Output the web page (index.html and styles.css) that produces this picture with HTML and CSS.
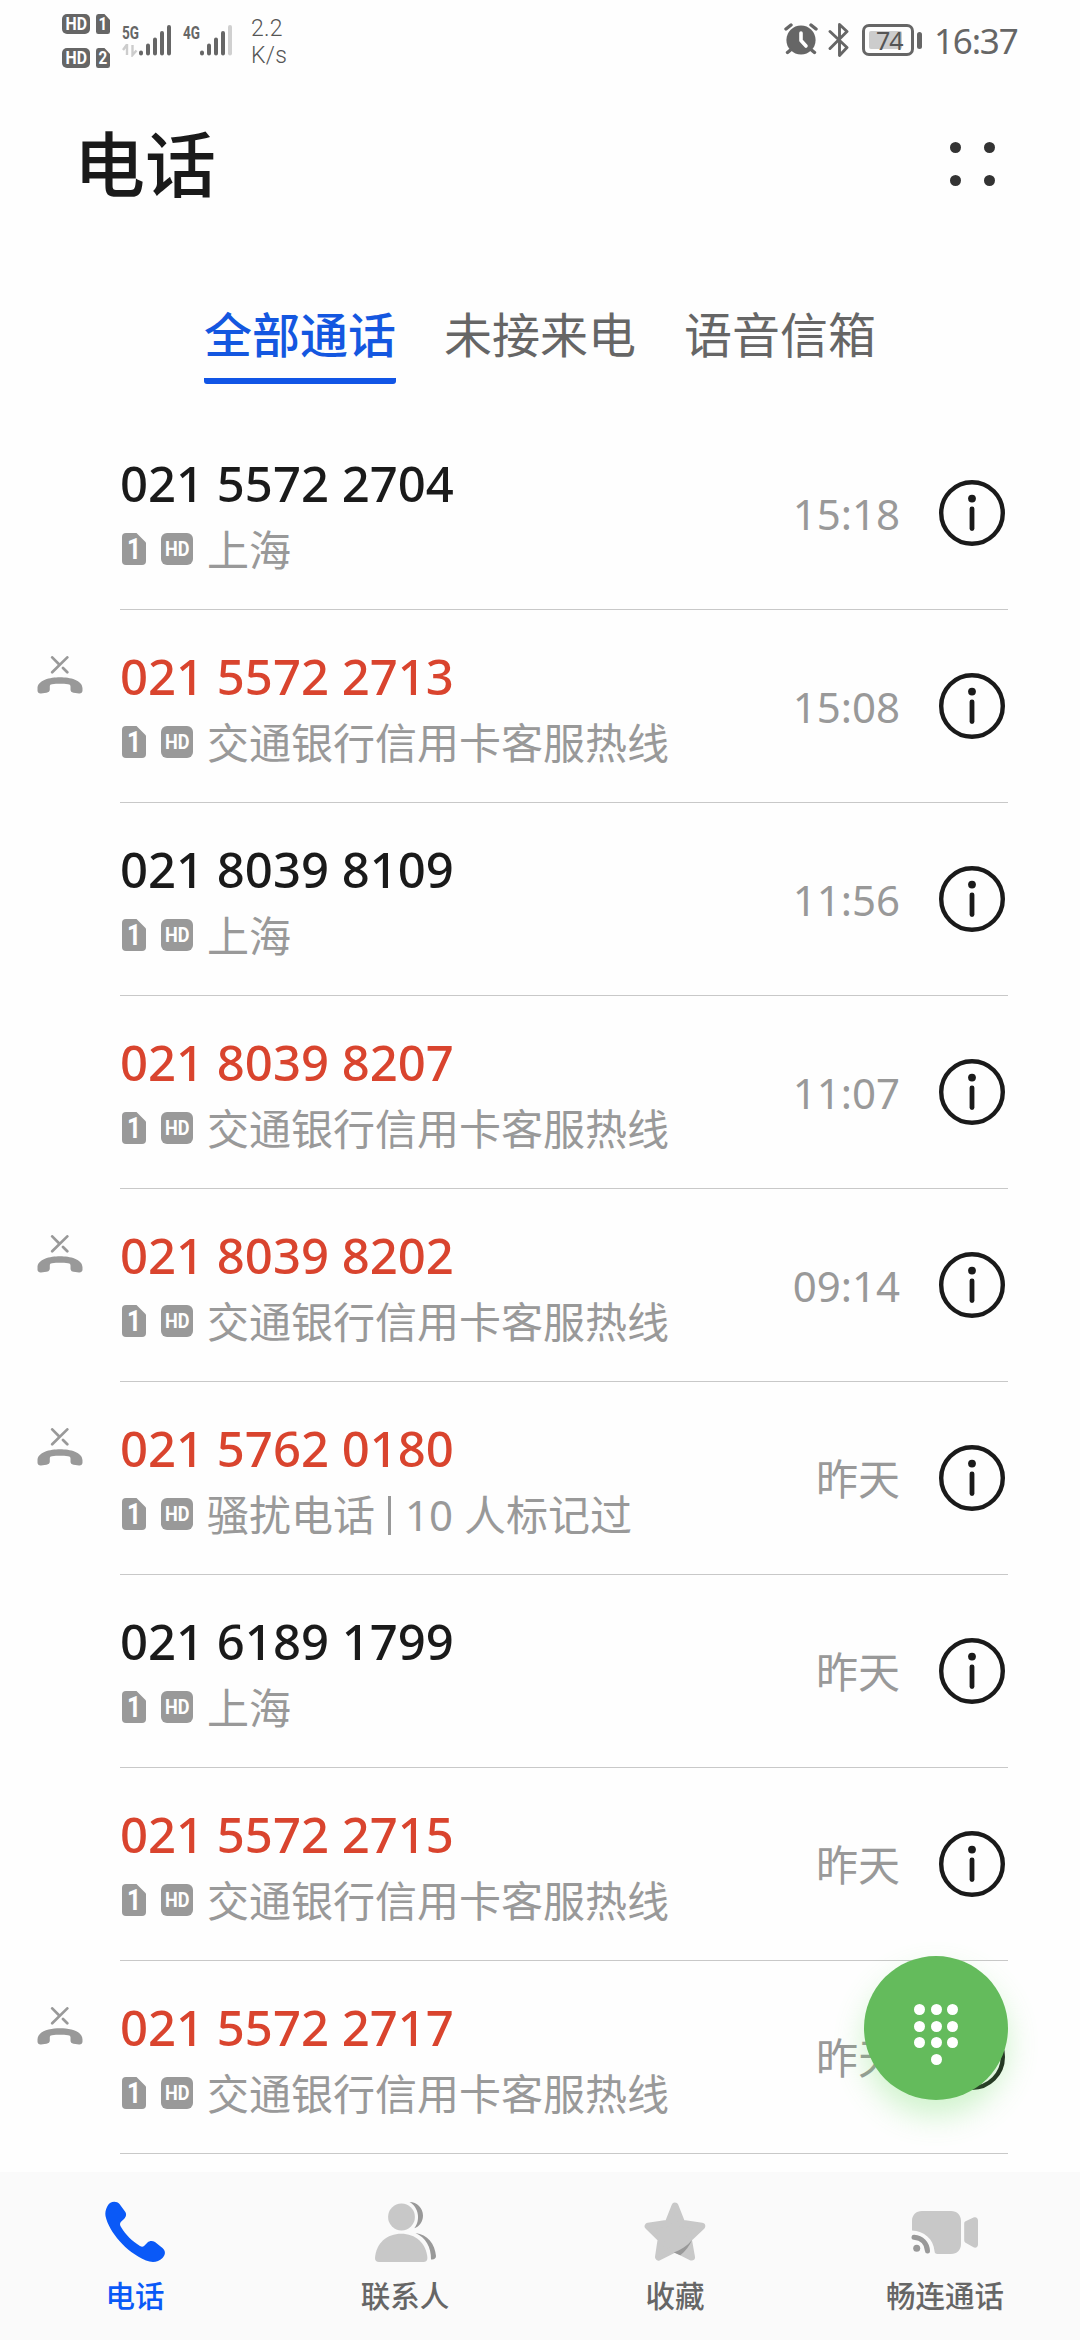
FILE: index.html
```
<!DOCTYPE html>
<html lang="zh-CN">
<head>
    <meta charset="UTF-8">
    <meta name="viewport" content="width=device-width, initial-scale=1.0">
    <title>电话</title>
    <link rel="stylesheet" href="styles.css">
</head>
<body>
    <!-- shared icons -->
    <svg class="defs" width="0" height="0">
        <symbol id="sim" viewBox="0 0 24 32">
            <path d="M4 0H14.5L24 9.5V28a4 4 0 0 1-4 4H4a4 4 0 0 1-4-4V4a4 4 0 0 1 4-4z" fill="currentColor"/>
        </symbol>
        <symbol id="info" viewBox="0 0 66 66">
            <circle cx="33" cy="33" r="30.8" fill="none" stroke="#1a1a1a" stroke-width="4.4"/>
            <circle cx="33" cy="18.6" r="3.9" fill="#1a1a1a"/>
            <path d="M33 28.8V48.6" stroke="#1a1a1a" stroke-width="4.8" stroke-linecap="round"/>
        </symbol>
        <symbol id="missed" viewBox="0 0 46 38">
            <path d="M15.2 1.4L22 8.2M30.3 1.4L15.2 16.3M26 12L30.3 16.3" fill="none" stroke="#999" stroke-width="2.7" stroke-linecap="round"/>
            <path d="M23 21.2C33 21.2 45.5 24 45.5 32.5V34.5C45.5 36.5 44 37.7 42 37.5L36.5 36.7C34.5 36.4 33.5 35.5 33.5 33.5V30.5C33.5 29 32.5 28.5 31 28.3C26 27.7 20 27.7 15 28.3C13.5 28.5 12.8 29 12.8 30.5V33.5C12.8 35.5 11.5 36.4 9.5 36.7L4 37.5C2 37.7.5 36.5.5 34.5V32.5C.5 24 13 21.2 23 21.2z" fill="#999"/>
        </symbol>
    </svg>

    <div class="status-bar">
        <div class="hd-stack">
            <div class="hd-line">
                <span class="status-hd"><b>HD</b></span>
                <span class="status-sim"><svg viewBox="0 0 24 32" preserveAspectRatio="none"><use href="#sim"/></svg><b>1</b></span>
            </div>
            <div class="hd-line">
                <span class="status-hd"><b>HD</b></span>
                <span class="status-sim"><svg viewBox="0 0 24 32" preserveAspectRatio="none"><use href="#sim"/></svg><b>2</b></span>
            </div>
        </div>
        <svg class="signal" width="112" height="42" viewBox="0 -8 112 42">
            <text x="0" y="15.5" textLength="17" lengthAdjust="spacingAndGlyphs">5G</text>
            <path d="M5 21V32M5 21.5L1 27M10.5 22V32L14.5 27.5" fill="none" stroke="#ccc" stroke-width="2.4"/>
            <g stroke="#666" stroke-width="4" stroke-linecap="round">
                <path d="M19 29.5V30.5M26 22.5V30.5M33 16.5V30.5M40 10V30.5M47 4V30.5"/>
                <path d="M80 29.5V30.5M87 22.5V30.5M94 16.5V30.5M101 10V30.5"/>
                <path d="M108 4V30.5" stroke="#d0d0d0"/>
            </g>
            <text x="61" y="15.5" textLength="17" lengthAdjust="spacingAndGlyphs">4G</text>
        </svg>
        <div class="speed">2.2<br>K/s</div>
        <div class="status-right">
            <svg width="34" height="34" viewBox="0 0 34 34">
                <circle cx="17" cy="18" r="14.6" fill="#666"/>
                <path d="M2 7L7 3M32 7L27 3M6.5 28L3.5 30.5M27.5 28L30.5 30.5" stroke="#666" stroke-width="3.4" stroke-linecap="round"/>
                <path d="M17 11V18.5L22 24" fill="none" stroke="#fff" stroke-width="3.6" stroke-linecap="round" stroke-linejoin="round"/>
            </svg>
            <svg class="bluetooth" width="22" height="36" viewBox="0 0 22 36">
                <path d="M2 9.5L19 25.5L11.5 33.5V2.5L19 9.5L2 26.5" fill="none" stroke="#666" stroke-width="2.9" stroke-linecap="round" stroke-linejoin="round"/>
            </svg>
            <div class="battery"><span>74</span></div>
            <div class="battery-cap"></div>
            <div class="clock">16:37</div>
        </div>
    </div>

    <header class="header">
        <h1>电话</h1>
        <div class="menu"><i></i><i></i><i></i><i></i></div>
    </header>

    <div class="tabs">
        <div class="tab active">全部通话</div>
        <div class="tab">未接来电</div>
        <div class="tab">语音信箱</div>
    </div>

    <div class="calls">
        <div class="call">
            <div class="mark"></div>
            <div class="body">
                <div class="text">
                    <div class="number">021 5572 2704</div>
                    <div class="detail"><span class="sim"><svg><use href="#sim"/></svg><b>1</b></span><span class="hd"><b>HD</b></span>上海</div>
                </div>
                <div class="time">15:18</div>
                <svg class="info"><use href="#info"/></svg>
            </div>
        </div>
        <div class="call missed">
            <div class="mark"><svg><use href="#missed"/></svg></div>
            <div class="body">
                <div class="text">
                    <div class="number">021 5572 2713</div>
                    <div class="detail"><span class="sim"><svg><use href="#sim"/></svg><b>1</b></span><span class="hd"><b>HD</b></span>交通银行信用卡客服热线</div>
                </div>
                <div class="time">15:08</div>
                <svg class="info"><use href="#info"/></svg>
            </div>
        </div>
        <div class="call">
            <div class="mark"></div>
            <div class="body">
                <div class="text">
                    <div class="number">021 8039 8109</div>
                    <div class="detail"><span class="sim"><svg><use href="#sim"/></svg><b>1</b></span><span class="hd"><b>HD</b></span>上海</div>
                </div>
                <div class="time">11:56</div>
                <svg class="info"><use href="#info"/></svg>
            </div>
        </div>
        <div class="call missed">
            <div class="mark"></div>
            <div class="body">
                <div class="text">
                    <div class="number">021 8039 8207</div>
                    <div class="detail"><span class="sim"><svg><use href="#sim"/></svg><b>1</b></span><span class="hd"><b>HD</b></span>交通银行信用卡客服热线</div>
                </div>
                <div class="time">11:07</div>
                <svg class="info"><use href="#info"/></svg>
            </div>
        </div>
        <div class="call missed">
            <div class="mark"><svg><use href="#missed"/></svg></div>
            <div class="body">
                <div class="text">
                    <div class="number">021 8039 8202</div>
                    <div class="detail"><span class="sim"><svg><use href="#sim"/></svg><b>1</b></span><span class="hd"><b>HD</b></span>交通银行信用卡客服热线</div>
                </div>
                <div class="time">09:14</div>
                <svg class="info"><use href="#info"/></svg>
            </div>
        </div>
        <div class="call missed">
            <div class="mark"><svg><use href="#missed"/></svg></div>
            <div class="body">
                <div class="text">
                    <div class="number">021 5762 0180</div>
                    <div class="detail"><span class="sim"><svg><use href="#sim"/></svg><b>1</b></span><span class="hd"><b>HD</b></span>骚扰电话<span class="bar"></span>10 人标记过</div>
                </div>
                <div class="time">昨天</div>
                <svg class="info"><use href="#info"/></svg>
            </div>
        </div>
        <div class="call">
            <div class="mark"></div>
            <div class="body">
                <div class="text">
                    <div class="number">021 6189 1799</div>
                    <div class="detail"><span class="sim"><svg><use href="#sim"/></svg><b>1</b></span><span class="hd"><b>HD</b></span>上海</div>
                </div>
                <div class="time">昨天</div>
                <svg class="info"><use href="#info"/></svg>
            </div>
        </div>
        <div class="call missed">
            <div class="mark"></div>
            <div class="body">
                <div class="text">
                    <div class="number">021 5572 2715</div>
                    <div class="detail"><span class="sim"><svg><use href="#sim"/></svg><b>1</b></span><span class="hd"><b>HD</b></span>交通银行信用卡客服热线</div>
                </div>
                <div class="time">昨天</div>
                <svg class="info"><use href="#info"/></svg>
            </div>
        </div>
        <div class="call missed">
            <div class="mark"><svg><use href="#missed"/></svg></div>
            <div class="body">
                <div class="text">
                    <div class="number">021 5572 2717</div>
                    <div class="detail"><span class="sim"><svg><use href="#sim"/></svg><b>1</b></span><span class="hd"><b>HD</b></span>交通银行信用卡客服热线</div>
                </div>
                <div class="time">昨天</div>
                <svg class="info"><use href="#info"/></svg>
            </div>
        </div>
    </div>

    <nav class="bottom-nav">
        <div class="nav-item active">
            <svg viewBox="0 0 72 72">
                <path d="M8 11C10 5.5 17 4 20.5 8L26 15.5C28 18 27 21 25 23L21.8 26C20.5 27.5 21 29.5 22 31C27 39 33 45 41 50C42.5 51 44 51 45 50L48.5 46.5C50.5 44.5 53.5 44.5 56 46L63.5 52C67 55 66.5 59 63.5 62C59 66.5 53 66.8 47 64.5C27 56 10 36 6.5 20C6 17 6.5 14 8 11z" fill="#0a59f7"/>
            </svg>
            <span>电话</span>
        </div>
        <div class="nav-item">
            <svg viewBox="0 0 72 72">
                <circle cx="32.5" cy="21" r="13.4" fill="#c8c8c8"/>
                <path d="M6 62C7 47 18 37.7 32.2 37.7S57.4 47 58.4 62C58.4 64.5 57 66 54.5 66H10C7.5 66 6 64.5 6 62z" fill="#c8c8c8"/>
                <path d="M40.5 6C48 6 54 12 54 19.5C54 25.5 50.5 30.5 45.3 32.3C52 24 49.5 11 40.5 6z" fill="#999"/>
                <path d="M46.5 37C58.5 38.5 66 48 67 60C67 62.5 65 64 62 63.5C62.3 51 56.5 41.5 46.5 37z" fill="#999"/>
            </svg>
            <span>联系人</span>
        </div>
        <div class="nav-item">
            <svg viewBox="0 0 72 72">
                <path d="M36 10L42.8 27.2L62.8 30.2L49.3 43L52.5 61L36 52.8L19.5 61L22.2 43L9.2 30.2L29.2 27.2z" fill="#c8c8c8" stroke="#c8c8c8" stroke-width="7" stroke-linejoin="round"/>
                <path d="M53 44C48 50 42 54 34.8 56.4L41.3 59.3C46.5 55 50.5 50 53 44z" fill="#999"/>
            </svg>
            <span>收藏</span>
        </div>
        <div class="nav-item">
            <svg viewBox="0 0 72 72">
                <path d="M3 34.5V25C3 19 7 15 13 15H42C48 15 52 19 52 25V48C52 54 48 58 42 58H28.5C26.5 58 25.7 57.3 25.5 55C24.5 43 15 35 3 34.5z" fill="#c8c8c8"/>
                <path d="M55.2 27.8C55.2 26.3 55.7 25.7 57 25L64.5 21.5C67 20.5 69 22 69 24.5V48.5C69 51 67 52.3 64.5 51.3L57 47C55.7 46.3 55.2 45.5 55.2 44z" fill="#c8c8c8"/>
                <path d="M5 41.3C13 42 18 47.5 18.5 55" fill="none" stroke="#999" stroke-width="5" stroke-linecap="round"/>
                <circle cx="7.7" cy="52.3" r="3.5" fill="#999"/>
            </svg>
            <span>畅连通话</span>
        </div>
    </nav>

    <div class="dialpad">
        <i></i><i></i><i></i>
        <i></i><i></i><i></i>
        <i></i><i></i><i></i>
        <i class="last"></i>
    </div>
</body>
</html>
```
FILE: styles.css
```
* {
    box-sizing: border-box;
}
body {
    margin: 0;
    width: 1080px;
    height: 2340px;
    display: flex;
    flex-direction: column;
    position: relative;
    overflow: hidden;
    background-color: #fefefe;
    color: #1a1a1a;
    font-family: "Noto Sans", "Noto Sans CJK SC", sans-serif;
}
svg {
    display: block;
    flex-shrink: 0;
}
.defs {
    position: absolute;
}

/* status bar */
.status-bar {
    display: flex;
    height: 84px;
    padding-left: 62px;
    padding-right: 63px;
    color: #666;
}
.hd-stack {
    display: flex;
    flex-direction: column;
    gap: 14px;
    padding-top: 14px;
    width: 60px;
}
.hd-line {
    display: flex;
    gap: 6px;
}
.status-hd {
    display: flex;
    justify-content: center;
    width: 28px;
    height: 20px;
    border-radius: 5px;
    background-color: #666;
}
.status-hd b {
    color: #fff;
    font: bold 18px/20px "Roboto", sans-serif;
    transform: scaleX(0.88);
}
.status-sim {
    display: grid;
    width: 14px;
    height: 20px;
}
.status-sim svg, .status-sim b {
    grid-area: 1 / 1;
    width: 14px;
    height: 20px;
}
.status-sim b {
    color: #fff;
    font: bold 18px/20px "Roboto", sans-serif;
    text-align: center;
    transform: scaleX(0.85);
}
.signal {
    margin-top: 15px;
}
.signal text {
    font: bold 19px "Roboto", sans-serif;
    fill: #666;
}
.speed {
    margin-left: 17px;
    padding-top: 15px;
    font: 300 23px/27px "Roboto", sans-serif;
    letter-spacing: 0.3px;
    color: #555;
}
.status-right {
    display: flex;
    margin-left: auto;
    padding-top: 22px;
}
.bluetooth {
    margin: 0 12px 0 10px;
}
.battery {
    width: 52px;
    height: 32px;
    margin-top: 2px;
    padding: 4px;
    border: 3px solid #666;
    border-radius: 7px;
}
.battery span {
    display: block;
    width: 33px;
    height: 18px;
    background-color: #ccc;
    border-radius: 2px;
    color: #555;
    font: 25px/19px "Noto Sans", sans-serif;
    letter-spacing: -1px;
    text-indent: 7px;
}
.battery-cap {
    width: 5px;
    height: 17px;
    margin: 10px 12px 0 3px;
    border-radius: 3px;
    background-color: #666;
}
.clock {
    font-size: 35px;
    line-height: 38px;
    letter-spacing: -1.2px;
    width: 83px;
}

/* header */
.header {
    display: flex;
    justify-content: space-between;
    height: 216px;
    padding: 28px 85px 0 74px;
}
h1 {
    margin: 0;
    font-size: 71px;
    font-weight: 500;
    line-height: 104px;
}
.menu {
    display: grid;
    grid-template-columns: 11px 11px;
    gap: 22px 23px;
    align-content: start;
    padding-top: 30px;
}
.menu i {
    width: 11px;
    height: 11px;
    border-radius: 50%;
    background-color: #333;
}

/* tabs */
.tabs {
    display: flex;
    justify-content: center;
    gap: 48px;
    height: 117px;
}
.tab {
    height: 84px;
    font-size: 48px;
    line-height: 70px;
    color: #666;
}
.tab.active {
    color: #1457e0;
    font-weight: 500;
    border-bottom: 6px solid #1155e6;
    border-radius: 3px;
}

/* call list */
.calls {
    flex: 1;
}
.call {
    display: flex;
    height: 193px;
}
.mark {
    width: 120px;
    padding: 46px 0 0 37px;
}
.mark svg {
    width: 46px;
    height: 38px;
}
.body {
    display: flex;
    width: 888px;
    border-bottom: 1px solid #c8c8c8;
}
.text {
    flex: 1;
    padding-top: 33px;
}
.number {
    font-size: 49px;
    font-weight: 500;
    line-height: 66px;
    height: 67px;
}
.missed .number {
    color: #d9442e;
}
.detail {
    display: flex;
    align-items: center;
    height: 66px;
    font-size: 42px;
    line-height: 66px;
    color: #999;
    white-space: pre;
}
.sim {
    display: grid;
    width: 24px;
    height: 32px;
    margin: -2px 15px 0 2px;
}
.sim svg, .sim b {
    grid-area: 1 / 1;
    width: 24px;
    height: 32px;
}
.sim b {
    color: #fff;
    font: bold 29px/33px "Roboto", sans-serif;
    text-align: center;
    transform: scaleX(0.85);
}
.hd {
    display: flex;
    justify-content: center;
    width: 32px;
    height: 32px;
    margin: -2px 14px 0 0;
    border-radius: 6px;
    background-color: #999;
}
.hd b {
    color: #fff;
    font: bold 21px/33px "Roboto", sans-serif;
    transform: scaleX(0.86);
}
.bar {
    width: 3px;
    height: 39px;
    margin: 0 14px 0 13px;
    background-color: #999;
}
.time {
    margin-right: 39px;
    font-size: 42px;
    line-height: 194px;
    color: #999;
}
.info {
    width: 66px;
    height: 66px;
    margin: 63px 3px 0 0;
}

/* bottom navigation */
.bottom-nav {
    display: flex;
    height: 168px;
    background-color: #fafafa;
}
.nav-item {
    flex: 1;
    display: flex;
    flex-direction: column;
    align-items: center;
    padding-top: 24px;
    font-size: 29.5px;
    font-weight: 500;
    line-height: 44px;
    color: #666;
}
.nav-item svg {
    width: 72px;
    height: 72px;
    margin-bottom: 6px;
}
.nav-item.active {
    color: #0a59f7;
}

/* floating dialpad button */
.dialpad {
    position: absolute;
    right: 72px;
    bottom: 240px;
    width: 144px;
    height: 144px;
    display: grid;
    grid-template-columns: repeat(3, 11px);
    grid-auto-rows: 11px;
    gap: 5.5px;
    justify-content: center;
    align-content: start;
    padding-top: 48px;
    border-radius: 50%;
    background-color: #64bb5c;
    box-shadow: 0 16px 30px rgba(100, 220, 90, 0.3);
}
.dialpad i {
    border-radius: 50%;
    background-color: #fff;
}
.dialpad .last {
    grid-column: 2;
}
```
